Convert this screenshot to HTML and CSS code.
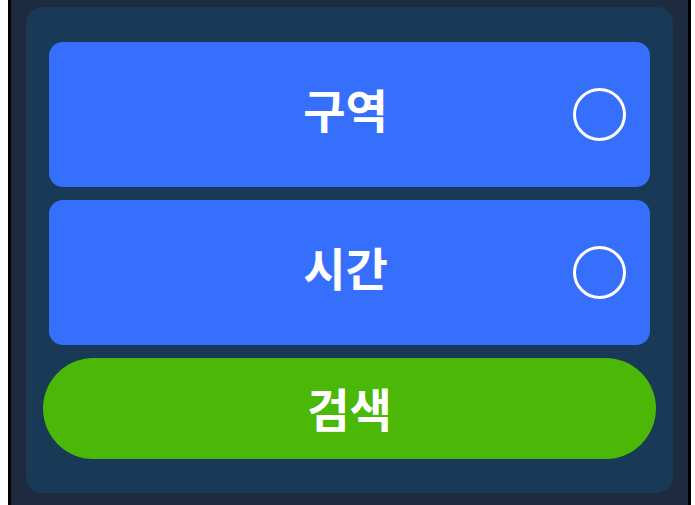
FILE: index.html
```html
<!DOCTYPE html>
<html lang="ko">
<head>
    <meta charset="UTF-8">
    <meta name="viewport" content="width=device-width, initial-scale=1.0">
    <title>검색</title>
    <link rel="stylesheet" href="styles.css">
</head>
<body>
    <div class="frame">
        <div class="panel">
            <button class="option" type="button">
                <span class="option-label">구역</span>
                <span class="radio"></span>
            </button>
            <button class="option" type="button">
                <span class="option-label">시간</span>
                <span class="radio"></span>
            </button>
            <button class="search-btn" type="button">검색</button>
        </div>
    </div>
</body>
</html>
```

FILE: styles.css
```css
body {
    margin: 0;
    padding: 0;
    background: #fff;
    font-family: "Noto Sans CJK KR", "Noto Sans", sans-serif;
}

.frame {
    box-sizing: border-box;
    width: 683px;
    height: 505px;
    margin-left: 8px;
    padding-top: 7px;
    background-color: #1d2a3f;
    border-left: 3px solid #000;
    border-right: 3px solid #000;
    overflow: hidden;
}

.panel {
    margin: 0 15px;
    padding: 35px 23px 34px;
    background-color: #183a56;
    border-radius: 16px;
    display: flex;
    flex-direction: column;
    gap: 13px;
}

.option {
    height: 145px;
    border: none;
    border-radius: 14px;
    background-color: #376ffd;
    color: #fff;
    display: flex;
    align-items: center;
    padding: 0 24px 0 69px;
    font-family: inherit;
    cursor: pointer;
}

.option-label {
    flex: 1;
    text-align: center;
    font-size: 46px;
    font-weight: 700;
    line-height: 1;
    padding-bottom: 14px;
}

.radio {
    box-sizing: border-box;
    width: 53px;
    height: 53px;
    border: 3px solid #fff;
    border-radius: 50%;
}

.search-btn {
    height: 101px;
    margin: 0 -6px;
    padding: 0 0 4px;
    border: none;
    border-radius: 51px;
    background-color: #4bb807;
    color: #fff;
    font-family: inherit;
    font-size: 46px;
    font-weight: 700;
    line-height: 1;
    cursor: pointer;
}
```
